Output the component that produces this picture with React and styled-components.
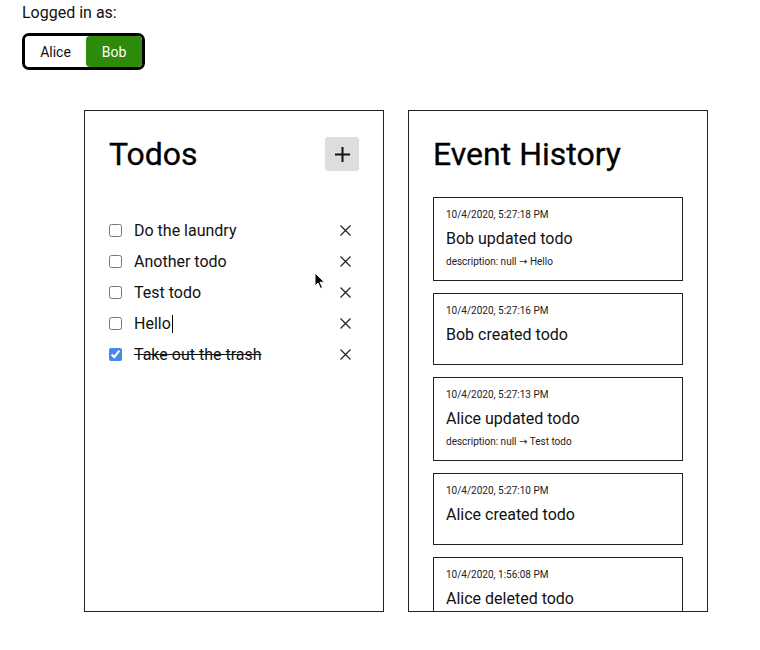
import React from 'react';
import styled, { createGlobalStyle } from 'styled-components';

const GlobalStyle = createGlobalStyle`
    html, body {
        margin: 0;
        padding: 0;
        background: #fff;
        font-family: Roboto, "Noto Sans", "Liberation Sans", sans-serif;
        color: #111;
    }
    * { box-sizing: border-box; }
`;

const Page = styled.div`
    padding: 3px 0 0 22px;
`;

const LoginLabel = styled.div`
    font-size: 16px;
    line-height: 19px;
`;

const Toggle = styled.div`
    display: inline-flex;
    margin-top: 11px;
    width: 123px;
    height: 37px;
    border: 3px solid #000;
    border-radius: 7px;
    overflow: hidden;
`;

const ToggleOption = styled.button`
    flex: 0 0 ${props => props.width}px;
    border: none;
    margin: 0;
    padding: 0;
    font-family: inherit;
    font-size: 14px;
    border-radius: 4px;
    background: ${props => props.active ? '#2e8a0b' : '#fff'};
    color: ${props => props.active ? '#fff' : '#111'};
`;

const Columns = styled.div`
    display: flex;
    gap: 24px;
    margin-top: 40px;
    padding-left: 62px;
`;

const Panel = styled.section`
    position: relative;
    width: 300px;
    height: 502px;
    border: 1px solid #222;
    padding: 24px;
    overflow: hidden;
`;

const Header = styled.div`
    display: flex;
    align-items: center;
    justify-content: space-between;
    margin-bottom: ${props => props.gap}px;
`;

const Title = styled.h2`
    margin: 0;
    font-size: 32px;
    font-weight: 400;
    line-height: 38px;
    color: #000;
    -webkit-text-stroke: 0.3px #000;
`;

const AddButton = styled.button`
    width: 34px;
    height: 34px;
    border: none;
    border-radius: 3px;
    background: #dddddd;
    display: flex;
    align-items: center;
    justify-content: center;
    padding: 0;
`;

const TodoList = styled.ul`
    list-style: none;
    margin: 0;
    padding: 0;
`;

const TodoRow = styled.li`
    display: flex;
    align-items: center;
    height: 31px;
`;

const Check = styled.input`
    width: 13px;
    height: 13px;
    margin: 0 12px 0 0;
    accent-color: #4688e8;
`;

const TodoText = styled.span`
    flex: 1;
    font-size: 16px;
    color: #111;
    text-decoration: ${props => props.done ? 'line-through' : 'none'};
    display: flex;
    align-items: center;
`;

const Caret = styled.span`
    display: inline-block;
    width: 1px;
    height: 18px;
    background: #000;
    margin-left: 1px;
`;

const DeleteButton = styled.button`
    width: 27px;
    height: 24px;
    border: none;
    background: none;
    padding: 0;
    display: flex;
    align-items: center;
    justify-content: center;
`;

const Pointer = styled.svg`
    position: absolute;
    left: 229px;
    top: 161px;
`;

const EventList = styled.div`
    display: flex;
    flex-direction: column;
    gap: 12px;
`;

const EventCard = styled.div`
    border: 1px solid #222;
    padding: 11px 12px 12px;
`;

const Stamp = styled.div`
    font-size: 10px;
    line-height: 12px;
    color: #222;
`;

const EventTitle = styled.div`
    font-size: 16px;
    line-height: 19px;
    margin: 8px 0 8px;
`;

const Change = styled.div`
    font-size: 10px;
    line-height: 12px;
    color: #222;
`;

const Arrow = styled.span`
    font-family: "DejaVu Sans", sans-serif;
    font-size: 10px;
`;

const todos = [
    { id: 1, text: 'Do the laundry', done: false },
    { id: 2, text: 'Another todo', done: false },
    { id: 3, text: 'Test todo', done: false },
    { id: 4, text: 'Hello', done: false, editing: true },
    { id: 5, text: 'Take out the trash', done: true },
];

const events = [
    { id: 1, at: '10/4/2020, 5:27:18 PM', what: 'Bob updated todo', field: 'description', from: 'null', to: 'Hello' },
    { id: 2, at: '10/4/2020, 5:27:16 PM', what: 'Bob created todo' },
    { id: 3, at: '10/4/2020, 5:27:13 PM', what: 'Alice updated todo', field: 'description', from: 'null', to: 'Test todo' },
    { id: 4, at: '10/4/2020, 5:27:10 PM', what: 'Alice created todo' },
    { id: 5, at: '10/4/2020, 1:56:08 PM', what: 'Alice deleted todo' },
];

const Cross = () => (
    <svg width="11" height="11" viewBox="0 0 11 11">
        <path d="M0.5 0.5 L10.5 10.5 M10.5 0.5 L0.5 10.5" stroke="#222" strokeWidth="1.2" fill="none" />
    </svg>
);

const App = () => (
    <Page>
        <GlobalStyle />
        <LoginLabel>Logged in as:</LoginLabel>
        <Toggle>
            <ToggleOption width={61}>Alice</ToggleOption>
            <ToggleOption width={56} active>Bob</ToggleOption>
        </Toggle>

        <Columns>
            <Panel>
                <Header gap={42}>
                    <Title>Todos</Title>
                    <AddButton aria-label="Add todo">
                        <svg width="15" height="15" viewBox="0 0 15 15">
                            <path d="M7.5 0 V15 M0 7.5 H15" stroke="#111" strokeWidth="2" />
                        </svg>
                    </AddButton>
                </Header>
                <TodoList>
                    {todos.map(t => (
                        <TodoRow key={t.id}>
                            <Check type="checkbox" defaultChecked={t.done} />
                            <TodoText done={t.done}>
                                {t.text}
                                {t.editing && <Caret />}
                            </TodoText>
                            <DeleteButton aria-label="Delete"><Cross /></DeleteButton>
                        </TodoRow>
                    ))}
                </TodoList>
                <Pointer width="12" height="18" viewBox="0 0 12 18">
                    <path d="M1 1 L1 14 L4 11 L6.5 16.5 L8.5 15.5 L6 10.2 L10.5 10.2 Z" fill="#000" stroke="#fff" strokeWidth="1" strokeLinejoin="round" />
                </Pointer>
            </Panel>

            <Panel>
                <Header gap={24}>
                    <Title>Event History</Title>
                </Header>
                <EventList>
                    {events.map(e => (
                        <EventCard key={e.id}>
                            <Stamp>{e.at}</Stamp>
                            <EventTitle>{e.what}</EventTitle>
                            {e.field && (
                                <Change>{e.field}: {e.from} <Arrow>→</Arrow> {e.to}</Change>
                            )}
                        </EventCard>
                    ))}
                </EventList>
            </Panel>
        </Columns>
    </Page>
);

export default App;
